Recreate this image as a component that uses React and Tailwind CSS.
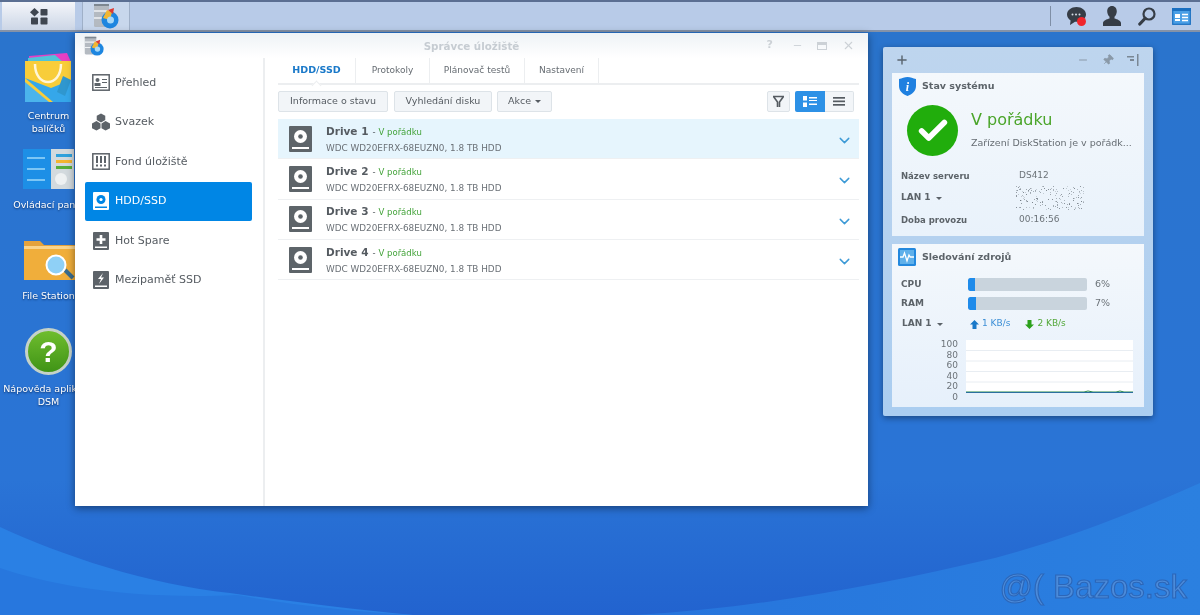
import React from 'react'
import { ChevronDown, Plus, Minus, Pin, X, Check } from 'lucide-react'

const font = "font-['DejaVu_Sans',sans-serif]"

function Wallpaper() {
  return (
    <svg className="absolute inset-0" width="1200" height="615" viewBox="0 0 1200 615">
      <defs>
        <linearGradient id="wall" x1="0" y1="0" x2="0" y2="1">
          <stop offset="0" stopColor="#2a74cc" />
          <stop offset="0.78" stopColor="#2a74d6" />
          <stop offset="1" stopColor="#2263cf" />
        </linearGradient>
        <linearGradient id="rightWave" x1="0" y1="0" x2="1" y2="0">
          <stop offset="0" stopColor="#2674dc" />
          <stop offset="1" stopColor="#2b80e0" />
        </linearGradient>
      </defs>
      <rect width="1200" height="615" fill="url(#wall)" />
      <path d="M0 527 C 60 555 150 585 230 593 C 300 603 360 610 413 615 L0 615Z" fill="#2a80e4" />
      <path d="M0 568 C 50 585 130 600 237 595 C 290 605 360 612 413 615 L0 615Z" fill="#2777de" />
      <path d="M635 615 C 760 608 880 585 995 558 C 1070 538 1140 510 1200 483 L1200 615Z" fill="url(#rightWave)" />
    </svg>
  )
}

function AppGlyph({ size = 26 }) {
  return (
    <svg width={size} height={size} viewBox="0 0 26 26">
      <rect x="1" y="1" width="15" height="23" rx="1.500" fill="#b4bac1" />
      <path d="M1 8h15M1 15h15" stroke="#eef1f4" strokeWidth="1.500" />
      <path d="M1 1h15v2H1Z" fill="#7d8791" />
      <circle cx="17" cy="17" r="8.500" fill="#1d86e0" />
      <path d="M17 17 L10 15 L14 7 L19 9Z" fill="#f2b632" />
      <path d="M15 7 L21 5 L20 11Z" fill="#dd3a32" />
      <circle cx="17.500" cy="17" r="3.500" fill="#a6d8f8" />
    </svg>
  )
}

function TaskBar() {
  return (
    <div className="relative flex h-[32px] items-stretch border-y-2 border-t-[#5b6f92] border-b-[#8492a8] bg-[#b8cbe8]">
      <div className="ml-[2px] flex w-[73px] items-center justify-center bg-gradient-to-b from-[#f4f6fa] to-[#ccd6e6]">
        <svg width="18" height="17" viewBox="0 0 18 17" fill="#3f4650">
          <path d="M4.500 0 L9 4.200 L4.500 8.400 L0 4.200Z" />
          <rect x="10.500" y="1" width="7" height="6.500" rx="0.800" />
          <rect x="1" y="9.500" width="7" height="7" rx="0.800" />
          <rect x="10.500" y="9.500" width="7" height="7" rx="0.800" />
        </svg>
      </div>
      <div className="ml-[7px] flex w-[48px] items-center justify-center border-x border-[#9fb0c8] bg-[#c8d7ec]">
        <AppGlyph />
      </div>
      <div className="ml-auto flex items-center pr-[9px]">
        <div className="mr-[16px] h-[20px] w-px bg-[#7f8fa6]" />
        <div className="relative mr-[17px]">
          <svg width="19" height="18" viewBox="0 0 19 18" className="block">
            <path d="M9.500 0C4.300 0 0 3.300 0 7.500c0 2.400 1.400 4.500 3.600 5.900L3 18l5-3.300c.5.100 1 .100 1.500.100 5.200 0 9.500-3.200 9.500-7.300S14.700 0 9.500 0Z" fill="#363d46" />
            <circle cx="5.500" cy="7.500" r="1" fill="#d6dde6" />
            <circle cx="9" cy="7.500" r="1" fill="#d6dde6" />
            <circle cx="12.500" cy="7.500" r="1" fill="#d6dde6" />
          </svg>
          <span className="absolute left-[10px] top-[10px] h-[9px] w-[9px] rounded-full bg-[#f0262c]" />
        </div>
        <svg width="18" height="20" viewBox="0 0 18 20" fill="#363d46" className="mr-[17px]">
          <path d="M9 0c3 0 4.800 2.300 4.800 5.300 0 2.200-.9 4.300-2.300 5.400v1.800c2.700.7 6.500 2.200 6.500 4.500V20H0v-3c0-2.300 3.800-3.800 6.500-4.500v-1.800C5.100 9.600 4.200 7.500 4.200 5.300 4.200 2.300 6 0 9 0Z" />
        </svg>
        <svg width="18" height="19" viewBox="0 0 18 19" fill="none" stroke="#363d46" className="mr-[16px]">
          <circle cx="11" cy="7" r="5.500" strokeWidth="2.200" />
          <path d="M7 11.500 L1.800 17" strokeWidth="3.200" strokeLinecap="round" />
        </svg>
        <svg width="19" height="17" viewBox="0 0 19 17">
          <rect x="0.700" y="0.700" width="17.600" height="15.600" fill="#4a9fe6" stroke="#1a6fc0" strokeWidth="1.200" />
          <rect x="0" y="0" width="19" height="3" fill="#1a6fc0" />
          <rect x="3" y="6" width="5" height="4" fill="#fff" />
          <rect x="3" y="11" width="5" height="2" fill="#fff" />
          <path d="M10 6.500h6M10 9.500h6M10 12.500h6" stroke="#fff" strokeWidth="1.300" />
        </svg>
      </div>
    </div>
  )
}

const desktopIcons = [
  { top: 'top-[52px]', label: ['Centrum', 'balíčků'], icon: 'bag' },
  { top: 'top-[149px]', label: ['Ovládací panel'], icon: 'panel' },
  { top: 'top-[240px]', label: ['File Station'], icon: 'folder' },
  { top: 'top-[328px]', label: ['Nápověda aplikace', 'DSM'], icon: 'help' },
]

function DesktopGlyph({ name }) {
  if (name === 'bag') {
    return (
      <svg width="50" height="50" viewBox="0 0 50 50" className="translate-x-[1px]">
        <path d="M4 4 L42 1 L46 10 L4 10Z" fill="#e63fc4" />
        <path d="M3 6 L30 3 L38 10 L3 10Z" fill="#4fc4d8" />
        <path d="M0 9 H46 V50 H0Z" fill="#f8cd3a" />
        <path d="M0 30 L24 50 H0Z" fill="#4bb4ec" />
        <path d="M0 26 L26 36 L46 28 V50 H28Z" fill="#35a7ea" />
        <path d="M10 12 C10 36 36 36 36 12" fill="none" stroke="#fff6d8" strokeWidth="2.500" />
        <path d="M38 24 L46 28 L40 44 L32 40Z" fill="#2f97cf" />
      </svg>
    )
  }
  if (name === 'panel') {
    return (
      <svg width="51" height="42" viewBox="0 0 51 42">
        <rect width="29" height="40" fill="#1d8fe6" />
        <rect x="28" width="23" height="40" fill="#d3dade" />
        <path d="M4 9h18M4 20h18M4 31h18" stroke="#7cc6f5" strokeWidth="2" />
        <rect x="33" y="5" width="16" height="3" fill="#31a2dc" />
        <rect x="33" y="11" width="16" height="3" fill="#f3b52f" />
        <rect x="33" y="17" width="16" height="3" fill="#57ae3a" />
        <circle cx="38" cy="30" r="6" fill="#eef1f2" />
      </svg>
    )
  }
  if (name === 'folder') {
    return (
      <svg width="52" height="42" viewBox="0 0 52 42">
        <path d="M1 1h16l4 4h31v30H1Z" fill="#e4a23c" />
        <path d="M1 6h51v34H1Z" fill="#f0ae3b" />
        <path d="M1 6h51v3H1Z" fill="#f9d48c" />
        <path d="M42 30 L50 38" stroke="#3a6c8d" strokeWidth="4" />
        <circle cx="33" cy="25" r="9.500" fill="#8fd0f6" stroke="#fff" strokeWidth="2" />
      </svg>
    )
  }
  return (
    <div className="flex h-[47px] w-[47px] items-center justify-center rounded-full border-[3px] border-[#c5d2c8] bg-gradient-to-b from-[#6fbd2e] to-[#3f9416] font-['Liberation_Sans',sans-serif] text-[30px] font-bold leading-none text-white">
      ?
    </div>
  )
}

function DesktopIcon({ top, label, icon }) {
  return (
    <div className={`absolute left-0 flex w-[97px] flex-col items-center ${top}`}>
      <DesktopGlyph name={icon} />
      <div className={`mt-[7px] whitespace-nowrap text-center text-[9.500px] leading-[13px] text-white [text-shadow:0_1px_2px_#0b2f66] ${font}`}>
        {label.map(l => <div key={l}>{l}</div>)}
      </div>
    </div>
  )
}

function NavGlyph({ name, active }) {
  const c = active ? '#fff' : '#5d6369'
  if (name === 'overview') {
    return (
      <svg width="18" height="17" viewBox="0 0 18 17">
        <rect x="0.800" y="0.800" width="16.400" height="15.400" fill="none" stroke={c} strokeWidth="1.500" />
        <circle cx="5.500" cy="6" r="2" fill={c} />
        <rect x="2.500" y="9" width="6" height="3" fill={c} />
        <path d="M10 5.500h5M10 8.500h5M3 13.500h12" stroke={c} strokeWidth="1.200" />
      </svg>
    )
  }
  if (name === 'volume') {
    return (
      <svg width="19" height="18" viewBox="0 0 19 18" fill={c}>
        <path d="M9.500 0 L14 2.500 V7 L9.500 9.500 L5 7 V2.500Z" />
        <path d="M4.700 8 L9 10.500 V15.500 L4.700 18 L0 15.500 V10.500Z" />
        <path d="M14.300 8 L19 10.500 V15.500 L14.300 18 L10 15.500 V10.500Z" />
      </svg>
    )
  }
  if (name === 'pool') {
    return (
      <svg width="18" height="17" viewBox="0 0 18 17">
        <rect x="0.800" y="0.800" width="16.400" height="15.400" fill="none" stroke={c} strokeWidth="1.500" />
        <path d="M5 3v7M9 3v7M13 3v7" stroke={c} strokeWidth="2" />
        <path d="M5 11.500v2M9 11.500v2M13 11.500v2" stroke={c} strokeWidth="2" />
      </svg>
    )
  }
  const inner = active ? '#0086e5' : '#fff'
  return (
    <svg width="16" height="18" viewBox="0 0 16 18">
      <rect width="16" height="18" rx="1" fill={c} />
      <rect x="2" y="14.500" width="12" height="1.500" fill={inner} />
      {name === 'hdd' && <circle cx="8" cy="7.500" r="4.500" fill={inner} />}
      {name === 'hdd' && <circle cx="8" cy="7.500" r="1.600" fill={c} />}
      {name === 'spare' && <path d="M8 3v9M3.500 7.500h9" stroke={inner} strokeWidth="2.600" />}
      {name === 'cache' && <path d="M10 2 L5 8 H8 L6 13 L11 6.500 H8Z" fill={inner} />}
    </svg>
  )
}

const navItems = [
  { id: 'overview', label: 'Přehled' },
  { id: 'volume', label: 'Svazek' },
  { id: 'pool', label: 'Fond úložiště' },
  { id: 'hdd', label: 'HDD/SSD', active: true },
  { id: 'spare', label: 'Hot Spare' },
  { id: 'cache', label: 'Mezipaměť SSD' },
]

function Sidebar() {
  return (
    <aside className="flex w-[190px] shrink-0 flex-col border-r-2 border-[#eceef0] pl-[10px] pr-[11px] pt-[5px]">
      {navItems.map(item => (
        <div
          key={item.id}
          className={`flex h-[39.500px] items-center gap-[5px] rounded-[2px] pl-[7px] text-[11px] ${item.active ? 'bg-[#0086e5] text-white' : 'text-[#555b61]'}`}
        >
          <span className="flex w-[18px] justify-center"><NavGlyph name={item.id} active={item.active} /></span>
          {item.label}
        </div>
      ))}
    </aside>
  )
}

function Btn({ className = '', children }) {
  return (
    <div className={`flex h-[21px] items-center justify-center rounded-[2px] border border-[#dde3e8] bg-[#f2f5f8] text-[9.500px] text-[#555b61] ${className}`}>
      {children}
    </div>
  )
}

const tabs = [
  { label: 'HDD/SSD', w: 'w-[78px]', active: true },
  { label: 'Protokoly', w: 'w-[74px]' },
  { label: 'Plánovač testů', w: 'w-[95px]' },
  { label: 'Nastavení', w: 'w-[74px]' },
]

function DriveRow({ n, selected }) {
  return (
    <div className={`flex h-[40.300px] items-center border-b border-[#eef0f2] pl-[11px] pr-[6px] ${selected ? 'bg-[#e6f5fd]' : ''}`}>
      <svg width="23" height="26" viewBox="0 0 23 26" className="shrink-0">
        <rect width="23" height="26" rx="1" fill="#5d6469" />
        <circle cx="11.500" cy="10.500" r="6.500" fill="#fff" />
        <circle cx="11.500" cy="10.500" r="2.300" fill="#5d6469" />
        <rect x="3" y="21" width="17" height="2" fill="#fff" />
      </svg>
      <div className="ml-[14px] flex-1">
        <div className="flex items-baseline leading-[14px] text-[#555b61]">
          <span className="text-[10.500px] font-bold">Drive {n}</span>
          <span className="ml-[4px] text-[8.500px]">-</span>
          <span className="ml-[3px] text-[8.500px] text-[#43a33a]">V pořádku</span>
        </div>
        <div className="mt-[3px] text-[8.850px] leading-[12px] text-[#6a7076]">WDC WD20EFRX-68EUZN0, 1.8 TB HDD</div>
      </div>
      <ChevronDown className="h-[17px] w-[17px] translate-y-[2px] text-[#3d9ad6]" strokeWidth={2} />
    </div>
  )
}

function StorageWindow() {
  return (
    <div className={`absolute left-[75px] top-[33px] flex h-[473px] w-[793px] flex-col bg-white shadow-[0_2px_8px_rgba(0,0,0,0.45)] ${font}`}>
      <div className="relative flex h-[25px] shrink-0 items-center bg-gradient-to-b from-[#eef2f6] to-white pl-[9px]">
        <AppGlyph size={20} />
        <span className="absolute left-0 right-0 top-[7px] text-center text-[10.300px] font-bold leading-[12px] text-[#c6ccd2]">Správce úložiště</span>
        <div className="ml-auto flex items-center pr-[13px] text-[#ccd1d6]">
          <span className="mr-[19px] text-[11px] font-bold">?</span>
          <Minus className="mr-[14px] h-[11px] w-[11px]" strokeWidth={2} />
          <span className="mr-[15px] h-[8px] w-[10px] border border-t-[3px] border-[#ccd1d6]" />
          <X className="h-[13px] w-[13px]" strokeWidth={2} />
        </div>
      </div>
      <div className="flex min-h-0 flex-1">
        <Sidebar />
        <div className="flex-1 pl-[13px] pr-[9px]">
          <div className="flex h-[27px] border-b-2 border-[#eceef0]">
            {tabs.map(t => (
              <div key={t.label} className={`relative flex items-center justify-center border-r border-[#eceef0] ${t.w} ${t.active ? 'text-[9.500px] font-bold text-[#1a79c9]' : 'text-[9px] text-[#666c72]'}`}>
                {t.label}
                {t.active && <span className="absolute -bottom-[2px] left-[35px] h-[7px] w-[7px] translate-y-[4px] rotate-45 border-l border-t border-[#eceef0] bg-white" />}
              </div>
            ))}
          </div>
          <div className="mt-[6px] flex items-center">
            <Btn className="w-[110px]">Informace o stavu</Btn>
            <Btn className="ml-[6px] w-[98px]">Vyhledání disku</Btn>
            <Btn className="ml-[5px] w-[55px]">
              Akce
              <span className="ml-[4px] h-0 w-0 border-x-[3px] border-t-[3px] border-x-transparent border-t-[#555b61]" />
            </Btn>
            <Btn className="ml-auto w-[23px]">
              <svg width="13" height="13" viewBox="0 0 13 13" fill="none" stroke="#555b61" strokeWidth="1.600">
                <path d="M1 1.500h11M1.500 1.500 L5.500 7v5M11.500 1.500 L7.500 7v5" />
              </svg>
            </Btn>
            <div className="ml-[5px] mr-[5px] flex h-[21px] w-[59px]">
              <div className="flex w-[30px] items-center justify-center rounded-l-[2px] bg-[#2d91e6]">
                <svg width="14" height="11" viewBox="0 0 14 11" fill="#fff">
                  <rect width="4" height="4.500" />
                  <rect y="6.500" width="4" height="4.500" />
                  <rect x="6" y="1" width="8" height="1.500" />
                  <rect x="6" y="4" width="8" height="1" />
                  <rect x="6" y="7.500" width="8" height="1.500" />
                </svg>
              </div>
              <div className="flex flex-1 items-center justify-center rounded-r-[2px] border border-l-0 border-[#dde3e8] bg-[#f2f5f8]">
                <svg width="12" height="9" viewBox="0 0 12 9" fill="#555b61">
                  <rect width="12" height="1.700" />
                  <rect y="3.500" width="12" height="1.700" />
                  <rect y="7" width="12" height="1.700" />
                </svg>
              </div>
            </div>
          </div>
          <div className="mt-[7px]">
            {[1, 2, 3, 4].map(n => <DriveRow key={n} n={n} selected={n === 1} />)}
          </div>
        </div>
      </div>
    </div>
  )
}

// masked-out IP in the screenshot, just a speckle
let seed = 7
const rand = () => {
  seed = (seed * 1103515245 + 12345) % 2147483648
  return seed / 2147483648
}
const speckle = Array.from({ length: 170 }, () => ({
  x: Math.floor(rand() * 68),
  y: Math.floor(rand() * 24),
  o: 0.25 + rand() * 0.6,
}))

function Speckle() {
  return (
    <svg width="68" height="24" viewBox="0 0 68 24">
      {speckle.map((d, i) => <rect key={i} x={d.x} y={d.y} width="1" height="1" fill="#6f7880" opacity={d.o} />)}
    </svg>
  )
}

function InfoRow({ label, children }) {
  return (
    <div className="flex h-[22px] items-center">
      <span className="w-[118px] shrink-0 text-[8.500px] font-bold text-[#5c6369]">{label}</span>
      <span className="text-[9px] text-[#6c7379]">{children}</span>
    </div>
  )
}

function LanLabel({ className = '' }) {
  return (
    <span className={`flex items-center text-[9px] font-bold text-[#5c6369] ${className}`}>
      LAN 1
      <span className="ml-[5px] h-0 w-0 border-x-[3px] border-t-[3px] border-x-transparent border-t-[#5c6369]" />
    </span>
  )
}

function Bar({ label, pct, w }) {
  return (
    <div className="flex h-[19px] items-center">
      <span className="w-[67px] shrink-0 text-[9px] font-bold text-[#5c6369]">{label}</span>
      <div className="h-[13px] w-[119px] overflow-hidden rounded-[2px] bg-[#c9d4dd]">
        <div className="h-full rounded-l-[2px] bg-[#1f8bea]" style={{ width: w }} />
      </div>
      <span className="ml-[8px] text-[9.500px] text-[#6c7379]">{pct}</span>
    </div>
  )
}

function Widgets() {
  return (
    <div className={`absolute left-[883px] top-[47px] flex h-[369px] w-[270px] flex-col rounded-[2px] bg-gradient-to-b from-[#bed5ee] to-[#aacdf0] px-[9px] shadow-[0_2px_6px_rgba(0,0,0,0.4)] ${font}`}>
      <div className="flex h-[26px] shrink-0 items-center text-[#5b6670]">
        <Plus className="ml-[3px] h-[14px] w-[14px]" strokeWidth={2.500} />
        <div className="ml-auto flex items-center gap-[13px] pr-[5px] text-[#8a99a8]">
          <Minus className="h-[12px] w-[12px]" strokeWidth={2} />
          <Pin className="h-[12px] w-[12px] rotate-45" fill="#8a99a8" strokeWidth={1.500} />
          <svg width="12" height="12" viewBox="0 0 12 12" fill="#7a8794">
            <rect x="0" y="2" width="7" height="1.500" />
            <rect x="3" y="5" width="4" height="2" />
            <rect x="10" y="0" width="1.500" height="12" />
          </svg>
        </div>
      </div>
      <div className="h-[163px] shrink-0 bg-gradient-to-b from-[#f4f8fc] to-[#e9f2fb] pl-[9px] pt-[4px]">
        <div className="-ml-[2px] flex items-center">
          <svg width="17" height="19" viewBox="0 0 17 19">
            <path d="M8.500 0C5.500 0 3 1.500 0 2v7c0 5 4 8.500 8.500 10C13 17.500 17 14 17 9V2c-3-.5-5.500-2-8.500-2Z" fill="#1f80e0" />
            <text x="8.500" y="14" textAnchor="middle" fontSize="12" fontWeight="700" fontStyle="italic" fill="#fff" fontFamily="Liberation Serif, serif">i</text>
          </svg>
          <span className="ml-[6px] text-[9.500px] font-bold text-[#5c6369]">Stav systému</span>
        </div>
        <div className="ml-[6px] mt-[9px] flex">
          <div className="flex h-[51px] w-[51px] shrink-0 items-center justify-center rounded-full bg-[#21ad0c]">
            <Check className="h-[34px] w-[34px] text-white" strokeWidth={4} />
          </div>
          <div className="ml-[13px] min-w-0 pt-[3px]">
            <div className="text-[16px] leading-[24px] text-[#4ba52a]">V pořádku</div>
            <div className="mt-[4px] whitespace-nowrap text-[9.500px] leading-[14px] text-[#666d73]">Zařízení DiskStation je v pořádk...</div>
          </div>
        </div>
        <div className="mt-[9px]">
          <InfoRow label="Název serveru">DS412</InfoRow>
          <div className="flex h-[22px] items-center">
            <LanLabel className="w-[115px] shrink-0" />
            <Speckle />
          </div>
          <InfoRow label="Doba provozu">00:16:56</InfoRow>
        </div>
      </div>
      <div className="mt-[8px] h-[163px] shrink-0 bg-gradient-to-b from-[#f4f8fc] to-[#e6f0fb] pl-[9px] pt-[4px]">
        <div className="-ml-[3px] flex items-center">
          <svg width="18" height="18" viewBox="0 0 18 18">
            <rect width="18" height="18" rx="1.500" fill="#2388dd" />
            <rect x="2" y="2" width="14" height="14" fill="#5fb0ea" />
            <path d="M2 9h3l1.500-4 2.500 8 2-6 1.200 2H16" fill="none" stroke="#fff" strokeWidth="1.300" />
          </svg>
          <span className="ml-[6px] text-[9.500px] font-bold text-[#5c6369]">Sledování zdrojů</span>
        </div>
        <div className="mt-[9px]">
          <Bar label="CPU" pct="6%" w="6%" />
          <Bar label="RAM" pct="7%" w="7%" />
        </div>
        <div className="mt-[2px] flex h-[18px] items-center text-[9px]">
          <LanLabel className="ml-[1px] w-[68px] shrink-0" />
          <svg width="9" height="9" viewBox="0 0 9 9" fill="#1a79c9"><path d="M4.500 0 L9 4.500H6.500V9h-4V4.500H0Z" /></svg>
          <span className="ml-[3px] text-[#3d8fd6]">1 KB/s</span>
          <svg width="9" height="9" viewBox="0 0 9 9" fill="#2ba01b" className="ml-[15px]"><path d="M4.500 9 L9 4.500H6.500V0h-4v4.500H0Z" /></svg>
          <span className="ml-[3px] text-[#54a83a]">2 KB/s</span>
        </div>
        <div className="mt-[6px] flex">
          <div className="w-[59px] pr-[2px] text-right text-[9px] leading-[10.600px] text-[#6c7379]">
            {[100, 80, 60, 40, 20, 0].map(v => <div key={v}>{v}</div>)}
          </div>
          <svg width="167" height="55" viewBox="0 0 167 55" className="ml-[6px] mt-[1px]">
            <rect width="167" height="53" fill="#fff" />
            <path d="M0 10.500H167M0 21H167M0 31.500H167M0 42H167" stroke="#e8edf2" strokeWidth="1" />
            <path d="M0 52 H118 L122 51 L127 52 L150 52 L154 51 L158 52 H167" fill="none" stroke="#2a8a4a" strokeWidth="1" />
            <path d="M0 52.500H167" stroke="#2a6f9e" strokeWidth="1" />
          </svg>
        </div>
      </div>
    </div>
  )
}

export default function App() {
  return (
    <div className="relative h-[615px] w-[1200px] overflow-hidden blur-[0.35px]">
      <Wallpaper />
      <TaskBar />
      {desktopIcons.map(d => <DesktopIcon key={d.icon} {...d} />)}
      <StorageWindow />
      <Widgets />
      <div className="absolute bottom-[12px] right-[13px] flex items-baseline font-['Liberation_Sans',sans-serif] text-[33px] leading-none text-[#4c8bd9] [-webkit-text-stroke:1.100px_#2c66b8]">
        @( Bazos.sk
      </div>
    </div>
  )
}
